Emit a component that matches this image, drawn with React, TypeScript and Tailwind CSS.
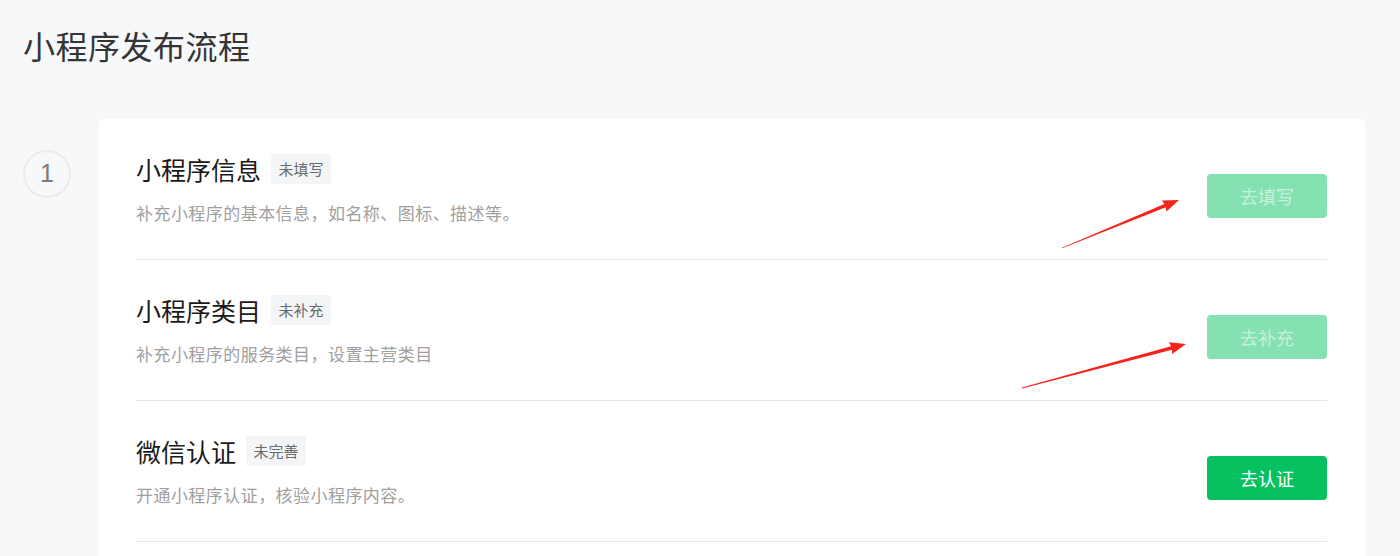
const steps = [
  {
    title: '小程序信息',
    tag: '未填写',
    desc: '补充小程序的基本信息，如名称、图标、描述等。',
    action: '去填写',
    disabled: true,
  },
  {
    title: '小程序类目',
    tag: '未补充',
    desc: '补充小程序的服务类目，设置主营类目',
    action: '去补充',
    disabled: true,
  },
  {
    title: '微信认证',
    tag: '未完善',
    desc: '开通小程序认证，核验小程序内容。',
    action: '去认证',
    disabled: false,
  },
];

// red annotation arrows drawn on top of the screenshot (page coords)
const arrows = [
  { from: [1062, 248], to: [1179, 200] },
  { from: [1022, 388], to: [1186, 344] },
];

const arrowPoints = (from: number[], to: number[]) => {
  const dx = to[0] - from[0];
  const dy = to[1] - from[1];
  const len = Math.hypot(dx, dy);
  const ux = dx / len;
  const uy = dy / len;
  const nx = -uy;
  const ny = ux;
  const bx = to[0] - ux * 15;
  const by = to[1] - uy * 15;
  const pts = [
    [from[0] + nx * 0.4, from[1] + ny * 0.4],
    [bx + nx * 1.8, by + ny * 1.8],
    [bx - ux * 1 + nx * 6, by - uy * 1 + ny * 6],
    [to[0], to[1]],
    [bx - ux * 1 - nx * 6, by - uy * 1 - ny * 6],
    [bx - nx * 1.8, by - ny * 1.8],
    [from[0] - nx * 0.4, from[1] - ny * 0.4],
  ];
  return pts.map((p) => p.join(',')).join(' ');
};

const StepRow = ({ step }: { step: (typeof steps)[number] }) => (
  <div className="flex items-start justify-between h-[141px] pt-[35px] border-b border-[#e5e5e5]">
    <div>
      <div className="flex items-center h-[30px]">
        <span className="text-[25px] leading-[30px] text-[#1a1a1a]">{step.title}</span>
        <span className="ml-[10px] h-[30px] px-[7.5px] flex items-center rounded-[2px] bg-[#f4f5f6] text-[15px] text-[#6b6b6b]">
          {step.tag}
        </span>
      </div>
      <p className="mt-[17px] text-[17px] tracking-[0.45px] leading-[24px] text-[#a0a0a0]">{step.desc}</p>
    </div>
    <button
      className={`mt-[20px] w-[120px] h-[44px] rounded-[4px] text-[18px] ${
        step.disabled ? 'bg-[#86e1b2] text-[#c7f1da]' : 'bg-[#07c160] text-white'
      }`}
    >
      {step.action}
    </button>
  </div>
);

export default function App() {
  return (
    <div
      className="relative w-full h-[556px] overflow-hidden bg-[#f7f8fa] px-[23px]"
      style={{ fontFamily: '"Noto Sans CJK SC", "Noto Sans", sans-serif' }}
    >
      <h1 className="pt-[29px] text-[32px] tracking-[0.5px] leading-[32px] text-[#353535] font-normal">
        小程序发布流程
      </h1>

      <div className="flex items-start gap-[28px] mt-[58px]">
        <div className="mt-[31px] w-[48px] h-[48px] shrink-0 rounded-full border-2 border-[#ebebeb] flex items-center justify-center text-[25px] text-[#7b7b7b] font-['Liberation_Sans',sans-serif]">
          1
        </div>
        <div className="w-[1266px] bg-white rounded-[4px] pl-[37px] pr-[38px] pb-[60px]">
          {steps.map((s) => (
            <StepRow key={s.title} step={s} />
          ))}
        </div>
      </div>

      <svg className="absolute inset-0 pointer-events-none" width="1400" height="556">
        {arrows.map((a, i) => (
          <polygon key={i} points={arrowPoints(a.from, a.to)} fill="#f5231b" />
        ))}
      </svg>
    </div>
  );
}
